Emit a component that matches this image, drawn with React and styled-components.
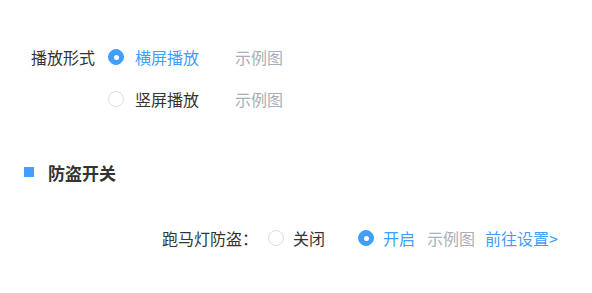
import React from "react";
import styled, { createGlobalStyle } from "styled-components";

const GlobalStyle = createGlobalStyle`
  html, body {
    margin: 0;
    padding: 0;
    background: #fff;
  }
  body {
    font-family: "Noto Sans CJK SC", "Noto Sans", sans-serif;
    font-size: 16px;
    color: #333;
  }
`;

const Page = styled.div`
  width: 592px;
  height: 293px;
  padding-top: 47px;
  box-sizing: border-box;
  overflow: hidden;
`;

const FormItem = styled.div`
  display: flex;
  align-items: flex-start;
  padding-left: ${(p) => p.indent}px;
  margin-top: ${(p) => p.top || 0}px;
`;

const Label = styled.div`
  height: 20px;
  line-height: 20px;
  margin-right: ${(p) => p.gap}px;
  color: #333;
  white-space: nowrap;
`;

const Options = styled.div`
  display: flex;
  flex-direction: column;
  gap: 22px;
`;

const Row = styled.div`
  display: flex;
  align-items: center;
  height: 20px;
`;

const Radio = styled.span`
  box-sizing: border-box;
  width: 16px;
  height: 16px;
  border-radius: 50%;
  flex-shrink: 0;
  border: 1px solid ${(p) => (p.checked ? "#409eff" : "#dcdfe6")};
  background: ${(p) => (p.checked ? "#409eff" : "#fff")};
  display: flex;
  align-items: center;
  justify-content: center;

  &::after {
    content: "";
    width: 5px;
    height: 5px;
    border-radius: 50%;
    background: #fff;
    display: ${(p) => (p.checked ? "block" : "none")};
  }
`;

const OptionText = styled.span`
  margin-left: ${(p) => p.gap || 11}px;
  width: ${(p) => (p.width ? `${p.width}px` : "auto")};
  line-height: 20px;
  color: ${(p) => (p.checked ? "#409eff" : "#333")};
  white-space: nowrap;
`;

const Example = styled.span`
  margin-left: ${(p) => p.gap}px;
  line-height: 20px;
  color: #a6afbc;
  white-space: nowrap;
`;

const LinkText = styled.span`
  margin-left: 10px;
  line-height: 20px;
  color: #409eff;
  white-space: nowrap;
  cursor: pointer;
`;

const Section = styled.div`
  display: flex;
  align-items: center;
  height: 24px;
  margin-top: 51px;
  padding-left: 24px;
`;

const Marker = styled.span`
  width: 10px;
  height: 10px;
  background: #409eff;
  margin-right: 14px;
`;

const SectionTitle = styled.span`
  font-size: 17px;
  font-weight: 700;
  color: #333;
`;

const Spacer = styled.span`
  width: ${(p) => p.size}px;
  flex-shrink: 0;
`;

export default function App() {
  return (
    <>
      <GlobalStyle />
      <Page>
        <FormItem indent={31}>
          <Label gap={13}>播放形式</Label>
          <Options>
            <Row>
              <Radio checked />
              <OptionText checked width={64}>横屏播放</OptionText>
              <Example gap={36}>示例图</Example>
            </Row>
            <Row>
              <Radio />
              <OptionText width={64}>竖屏播放</OptionText>
              <Example gap={36}>示例图</Example>
            </Row>
          </Options>
        </FormItem>

        <Section>
          <Marker />
          <SectionTitle>防盗开关</SectionTitle>
        </Section>

        <FormItem indent={162} top={44}>
          <Label gap={10}>跑马灯防盗：</Label>
          <Row>
            <Radio />
            <OptionText gap={9}>关闭</OptionText>
            <Spacer size={33} />
            <Radio checked />
            <OptionText checked gap={9}>开启</OptionText>
            <Example gap={12}>示例图</Example>
            <LinkText>前往设置&gt;</LinkText>
          </Row>
        </FormItem>
      </Page>
    </>
  );
}
